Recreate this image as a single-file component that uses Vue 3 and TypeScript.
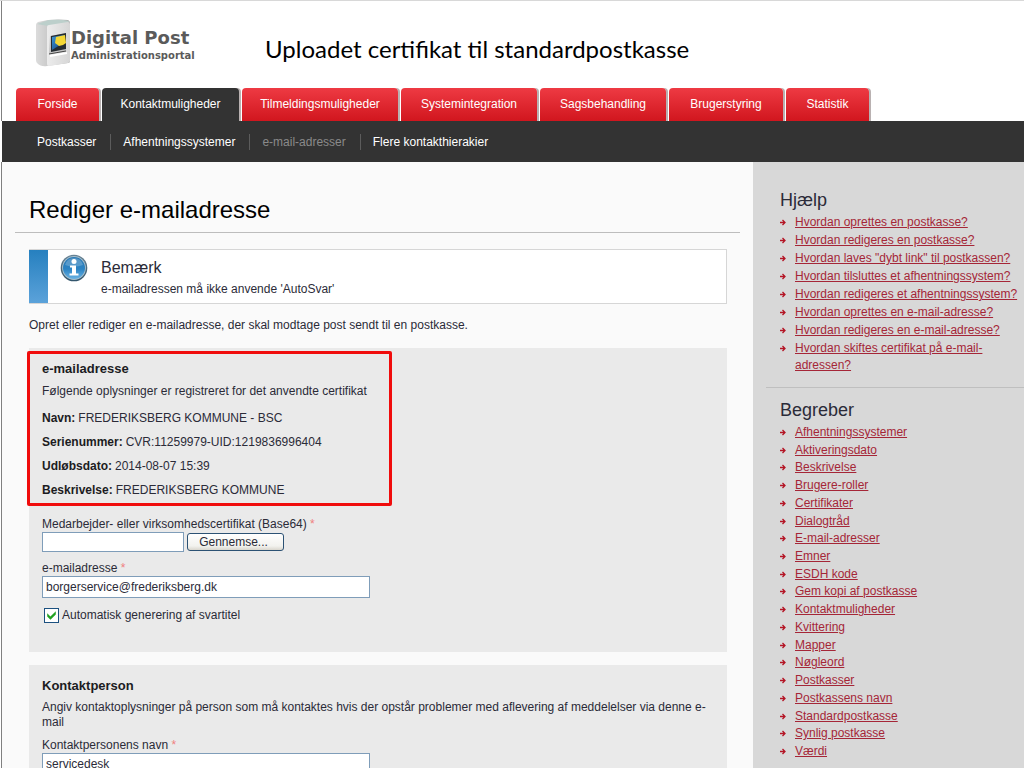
<script setup lang="ts">
import { ref } from 'vue'

interface Tab { label: string; active?: boolean }
interface Detail { label: string; value: string }
interface LinkGroup { title: string; kind: string; links: string[] }

const tabs: Tab[] = [
  { label: 'Forside' },
  { label: 'Kontaktmuligheder', active: true },
  { label: 'Tilmeldingsmuligheder' },
  { label: 'Systemintegration' },
  { label: 'Sagsbehandling' },
  { label: 'Brugerstyring' },
  { label: 'Statistik' },
]

const subTabs: Tab[] = [
  { label: 'Postkasser' },
  { label: 'Afhentningssystemer' },
  { label: 'e-mail-adresser', active: true },
  { label: 'Flere kontakthierakier' },
]

const details: Detail[] = [
  { label: 'Navn:', value: 'FREDERIKSBERG KOMMUNE - BSC' },
  { label: 'Serienummer:', value: 'CVR:11259979-UID:1219836996404' },
  { label: 'Udløbsdato:', value: '2014-08-07 15:39' },
  { label: 'Beskrivelse:', value: 'FREDERIKSBERG KOMMUNE' },
]

const groups: LinkGroup[] = [
  {
    title: 'Hjælp',
    kind: 'help',
    links: [
      'Hvordan oprettes en postkasse?',
      'Hvordan redigeres en postkasse?',
      'Hvordan laves "dybt link" til postkassen?',
      'Hvordan tilsluttes et afhentningssystem?',
      'Hvordan redigeres et afhentningssystem?',
      'Hvordan oprettes en e-mail-adresse?',
      'Hvordan redigeres en e-mail-adresse?',
      'Hvordan skiftes certifikat på e-mail-adressen?',
    ],
  },
  {
    title: 'Begreber',
    kind: 'terms',
    links: [
      'Afhentningssystemer', 'Aktiveringsdato', 'Beskrivelse', 'Brugere-roller', 'Certifikater',
      'Dialogtråd', 'E-mail-adresser', 'Emner', 'ESDH kode', 'Gem kopi af postkasse',
      'Kontaktmuligheder', 'Kvittering', 'Mapper', 'Nøgleord', 'Postkasser',
      'Postkassens navn', 'Standardpostkasse', 'Synlig postkasse', 'Værdi',
    ],
  },
]

const certificate = ref('')
const email = ref('borgerservice@frederiksberg.dk')
const autoTitle = ref(true)
const contactName = ref('servicedesk')
</script>

<template>
  <div class="page">
    <header class="header">
      <div class="brand">
        <a class="logo" href="#">
          <svg class="logo-mark" viewBox="0 0 36 48" aria-hidden="true">
            <defs>
              <linearGradient id="side" x1="0" x2="1"><stop offset="0" stop-color="#dcdcdc" /><stop offset="1" stop-color="#a9a9a9" /></linearGradient>
              <linearGradient id="front" x1="0" x2="1"><stop offset="0" stop-color="#ececec" /><stop offset="1" stop-color="#d6d6d6" /></linearGradient>
              <linearGradient id="screen" x1="0" x2="1" y2="1"><stop offset="0" stop-color="#3f9ad8" /><stop offset="1" stop-color="#123c78" /></linearGradient>
            </defs>
            <path d="M1 6 Q1 4 3 3 L13 1 Q24 0 33 1 Q35 2 35 4 L35 42 Q35 44 33 44 L12 47 Q6 48 2 44 Q1 43 1 41Z" fill="url(#side)" />
            <path d="M2 5 L14 1 Q26 0 34 2 L33 4 L13 7Z" fill="#bccfcb" />
            <path d="M12 8 Q12 6 14 6 L33 3 Q35 3 35 5 L35 42 Q35 43 33 44 L14 47 Q12 47 12 45Z" fill="url(#front)" />
            <path d="M15 17 L31 14 L31 32 L14 35Z" fill="#c4c4c4" />
            <path d="M16 17 L31 14 L31 30 L16 33Z" fill="#252b31" />
            <path d="M17 18 L29 16 L25 26 L17 31Z" fill="url(#screen)" />
            <path d="M21 18 L30 16 L31 24 L28 26 L24 27 L20 24Z" fill="#f4d735" />
            <path d="M14 35 L31 32" stroke="#444" stroke-width="1" />
            <path d="M15 37 L32 34" stroke="#fff" stroke-width="2" />
          </svg>
          <span class="logo-text">
            <span class="logo-name">Digital Post</span>
            <span class="logo-sub">Administrationsportal</span>
          </span>
        </a>
        <p class="caption">Uploadet certifikat til standardpostkasse</p>
      </div>
      <nav class="tabs" aria-label="Hovedmenu">
        <a v-for="tab in tabs" :key="tab.label" href="#" class="tab" :class="{ active: tab.active }">{{ tab.label }}</a>
      </nav>
    </header>

    <nav class="subnav" aria-label="Undermenu">
      <a v-for="tab in subTabs" :key="tab.label" href="#" class="subtab" :class="{ current: tab.active }">{{ tab.label }}</a>
    </nav>

    <div class="body">
      <main class="content">
        <h1>Rediger e-mailadresse</h1>

        <section class="notice">
          <svg class="info" viewBox="0 0 28 28" aria-hidden="true">
            <defs>
              <linearGradient id="rim" x2="0" y2="1"><stop offset="0" stop-color="#688394" /><stop offset="1" stop-color="#31546b" /></linearGradient>
              <linearGradient id="disc" x2="0" y2="1"><stop offset="0" stop-color="#2878b4" /><stop offset=".55" stop-color="#2b83c3" /><stop offset="1" stop-color="#69b2e3" /></linearGradient>
            </defs>
            <circle cx="14" cy="14" r="13.3" fill="url(#rim)" />
            <circle cx="14" cy="14" r="11.9" fill="#a9c0cd" />
            <circle cx="14" cy="14" r="11" fill="url(#disc)" />
            <path d="M5 11 Q7 4 14 4 Q21 4 23 11 Q14 14 5 11Z" fill="#fff" opacity=".22" />
            <circle cx="14" cy="7.5" r="2.5" fill="#fff" />
            <path d="M10 11.5 H16 V19.5 H18.5 V21.5 H9.5 V19.5 H12 V13.5 H10Z" fill="#fff" />
          </svg>
          <div class="notice-text">
            <h2>Bemærk</h2>
            <p>e-mailadressen må ikke anvende 'AutoSvar'</p>
          </div>
        </section>

        <p class="intro">Opret eller rediger en e-mailadresse, der skal modtage post sendt til en postkasse.</p>

        <form class="form" @submit.prevent>
          <section class="panel">
            <div class="certificate">
              <h3>e-mailadresse</h3>
              <p>Følgende oplysninger er registreret for det anvendte certifikat</p>
              <dl>
                <div v-for="item in details" :key="item.label" class="detail">
                  <dt>{{ item.label }}</dt>
                  <dd>{{ item.value }}</dd>
                </div>
              </dl>
            </div>

            <div class="field upload">
              <label for="certificate">Medarbejder- eller virksomhedscertifikat (Base64) <span class="required">*</span></label>
              <div class="picker">
                <input id="certificate" v-model="certificate" class="short" type="text">
                <button type="button">Gennemse...</button>
              </div>
            </div>

            <div class="field address">
              <label for="email">e-mailadresse <span class="required">*</span></label>
              <input id="email" v-model="email" class="long" type="text">
            </div>

            <label class="check" for="auto-title">
              <span class="tick">
                <input id="auto-title" v-model="autoTitle" type="checkbox">
                <svg v-if="autoTitle" viewBox="0 0 14 14" aria-hidden="true"><path d="M3 5 L6 8 L11 3 V6 L6 11 L3 8Z" fill="#21a121" /></svg>
              </span>
              Automatisk generering af svartitel
            </label>
          </section>

          <section class="panel">
            <h3>Kontaktperson</h3>
            <p class="help-text">Angiv kontaktoplysninger på person som må kontaktes hvis der opstår problemer med aflevering af meddelelser via denne e-mail</p>
            <div class="field contact">
              <label for="contact-name">Kontaktpersonens navn <span class="required">*</span></label>
              <input id="contact-name" v-model="contactName" class="long" type="text">
            </div>
          </section>
        </form>
      </main>

      <aside class="sidebar">
        <section v-for="group in groups" :key="group.kind" class="group" :class="group.kind">
          <h2>{{ group.title }}</h2>
          <ul>
            <li v-for="link in group.links" :key="link">
              <svg class="arrow" viewBox="0 0 6 7" aria-hidden="true"><path d="M0 3.5 H5 M2.5 1 L5 3.5 L2.5 6" fill="none" stroke="#b41424" stroke-width="1.3" /></svg>
              <a href="#">{{ link }}</a>
            </li>
          </ul>
        </section>
      </aside>
    </div>
  </div>
</template>

<style>
body {
  margin: 0;
}
</style>

<style scoped>
.page {
  box-sizing: border-box;
  display: flex;
  flex-direction: column;
  height: 100vh;
  overflow: hidden;
  padding-left: 1px;
  border-top: 1px solid #d8d8d8;
  background: #fff;
  color: #2b2b38;
  font: 12px/16px "Liberation Sans", Arial, sans-serif;
}

h1, h2, h3, p, dl, dd, ul {
  margin: 0;
  padding: 0;
}

.header {
  flex: none;
  border-left: 1px solid #808080;
}

.brand {
  display: flex;
  align-items: flex-start;
  height: 87px;
  padding-left: 33px;
}

.logo {
  display: flex;
  width: 230px;
  padding-top: 18px;
  color: #5a5a5a;
  font-family: "DejaVu Sans", Verdana, sans-serif;
  font-weight: bold;
  text-decoration: none;
}

.logo-mark {
  width: 36px;
  height: 48px;
}

.logo-text {
  display: flex;
  flex-direction: column;
  padding-top: 8px;
}

.logo-name {
  font-size: 18px;
  line-height: 22px;
}

.logo-sub {
  font-size: 10px;
  line-height: 14px;
}

.caption {
  padding-top: 33px;
  color: #000;
  font: 24px/30px Lato, Calibri, sans-serif;
}

.tabs {
  display: grid;
  grid-template-columns: 83px 137px 156px 136px 126px 114px 83px;
  gap: 3px;
  height: 33px;
  padding-left: 14px;
}

.tab {
  border-radius: 4px 4px 0 0;
  background: linear-gradient(#ee3a43, #d1161e);
  box-shadow: 2px 0 0 #b9b1b1;
  color: #fff;
  line-height: 32px;
  text-align: center;
  text-decoration: none;
  white-space: nowrap;
}

.tab.active {
  background: #333;
}

.subnav {
  display: flex;
  flex: none;
  align-items: center;
  height: 41px;
  margin-left: 1px;
  padding-left: 23px;
  background: #333;
}

.subtab {
  padding: 0 14px 0 12px;
  color: #fff;
  text-decoration: none;
}

.subtab + .subtab {
  border-left: 1px solid #5c5c5c;
}

.subtab.current {
  color: #8a8a8a;
}

.body {
  display: flex;
  flex: 1;
  min-height: 0;
  border-left: 1px solid #808080;
}

.content {
  flex: 1;
  min-width: 0;
  padding: 31px 13px 0;
  background: #fafafa;
}

h1 {
  padding: 0 14px 6px;
  border-bottom: 1px solid #bdbdbd;
  color: #000;
  font-size: 24px;
  font-weight: normal;
  line-height: 33px;
}

.notice {
  display: flex;
  box-sizing: border-box;
  min-height: 55px;
  margin: 16px 13px 0 14px;
  border: 1px solid #d6d6d6;
  border-left: 0;
  background: #fff;
}

.notice::before {
  width: 19px;
  background: linear-gradient(#2680bf, #5ba2da);
  content: "";
}

.info {
  width: 28px;
  height: 28px;
  margin: 4px 13px 0 12px;
}

.notice-text {
  padding-top: 7px;
}

.notice h2 {
  font-size: 16px;
  font-weight: normal;
  line-height: 22px;
}

.notice p {
  padding-top: 2px;
}

.intro {
  padding: 13px 14px 0;
}

.form {
  display: flex;
  flex-direction: column;
  gap: 13px;
  margin: 15px 13px 0 14px;
}

.panel {
  padding: 13px 13px 29px;
  background: #eaeaea;
}

h3 {
  color: #1c1c22;
  font-size: 13px;
  line-height: 16px;
}

.certificate {
  position: relative;
  padding-bottom: 4px;
}

/* Red frame marking the registered certificate details. */
.certificate::after {
  position: absolute;
  inset: -10px 322px 0 -15px;
  border: 3px solid #f00c0c;
  border-radius: 2px;
  content: "";
  pointer-events: none;
}

.certificate p {
  padding: 6px 0 7px;
}

.detail {
  display: flex;
  gap: 3px;
  line-height: 24px;
}

dt {
  color: #1c1c22;
  font-weight: bold;
}

.field label {
  display: block;
}

.required {
  color: #f08080;
}

.upload {
  padding-top: 10px;
}

.address {
  padding-top: 8px;
}

.picker {
  display: flex;
  align-items: center;
  gap: 3px;
}

input[type="text"] {
  box-sizing: border-box;
  display: block;
  margin: 0;
  padding: 0 3px;
  border: 1px solid #7f9db9;
  border-radius: 0;
  background: #fff;
  color: #2b2b38;
  font: inherit;
}

.short {
  width: 142px;
  height: 20px;
}

.long {
  width: 328px;
  height: 22px;
}

button {
  width: 97px;
  height: 18px;
  padding: 0 4px 0 0;
  border: 1px solid #2c5274;
  border-radius: 3px;
  background: linear-gradient(#fff, #f2f2ee 75%, #d9d6cd);
  color: #2b2b38;
  font: 12px/16px "Liberation Sans", Arial, sans-serif;
}

.check {
  display: flex;
  align-items: center;
  gap: 3px;
  padding: 9px 0 0 2px;
}

.tick {
  display: grid;
  width: 15px;
  height: 15px;
}

.tick > * {
  grid-area: 1 / 1;
}

.tick input {
  box-sizing: border-box;
  width: 15px;
  height: 15px;
  margin: 0;
  border: 1px solid #1c5180;
  background: #fff;
  appearance: none;
}

.tick svg {
  width: 15px;
  height: 15px;
  pointer-events: none;
}

.help-text {
  padding-top: 6px;
  line-height: 15px;
}

.contact {
  padding-top: 7px;
}

.sidebar {
  box-sizing: border-box;
  width: 271px;
  padding: 26px 0 0 13px;
  background: #d8d8d8;
}

.group + .group {
  margin-top: 13px;
  padding-top: 10px;
  border-top: 1px solid #bfbfbf;
}

.group h2 {
  padding: 0 0 2px 14px;
  font-size: 18px;
  font-weight: normal;
  line-height: 24px;
}

.group ul {
  display: flex;
  flex-direction: column;
  justify-content: space-between;
  padding-left: 14px;
  list-style: none;
}

.help ul {
  min-height: 160px;
}

.terms ul {
  min-height: 336px;
}

.group li {
  display: flex;
  gap: 9px;
  line-height: 17px;
}

.arrow {
  flex: none;
  width: 6px;
  height: 7px;
  margin-top: 5px;
}

.group a {
  color: #a52637;
}
</style>
